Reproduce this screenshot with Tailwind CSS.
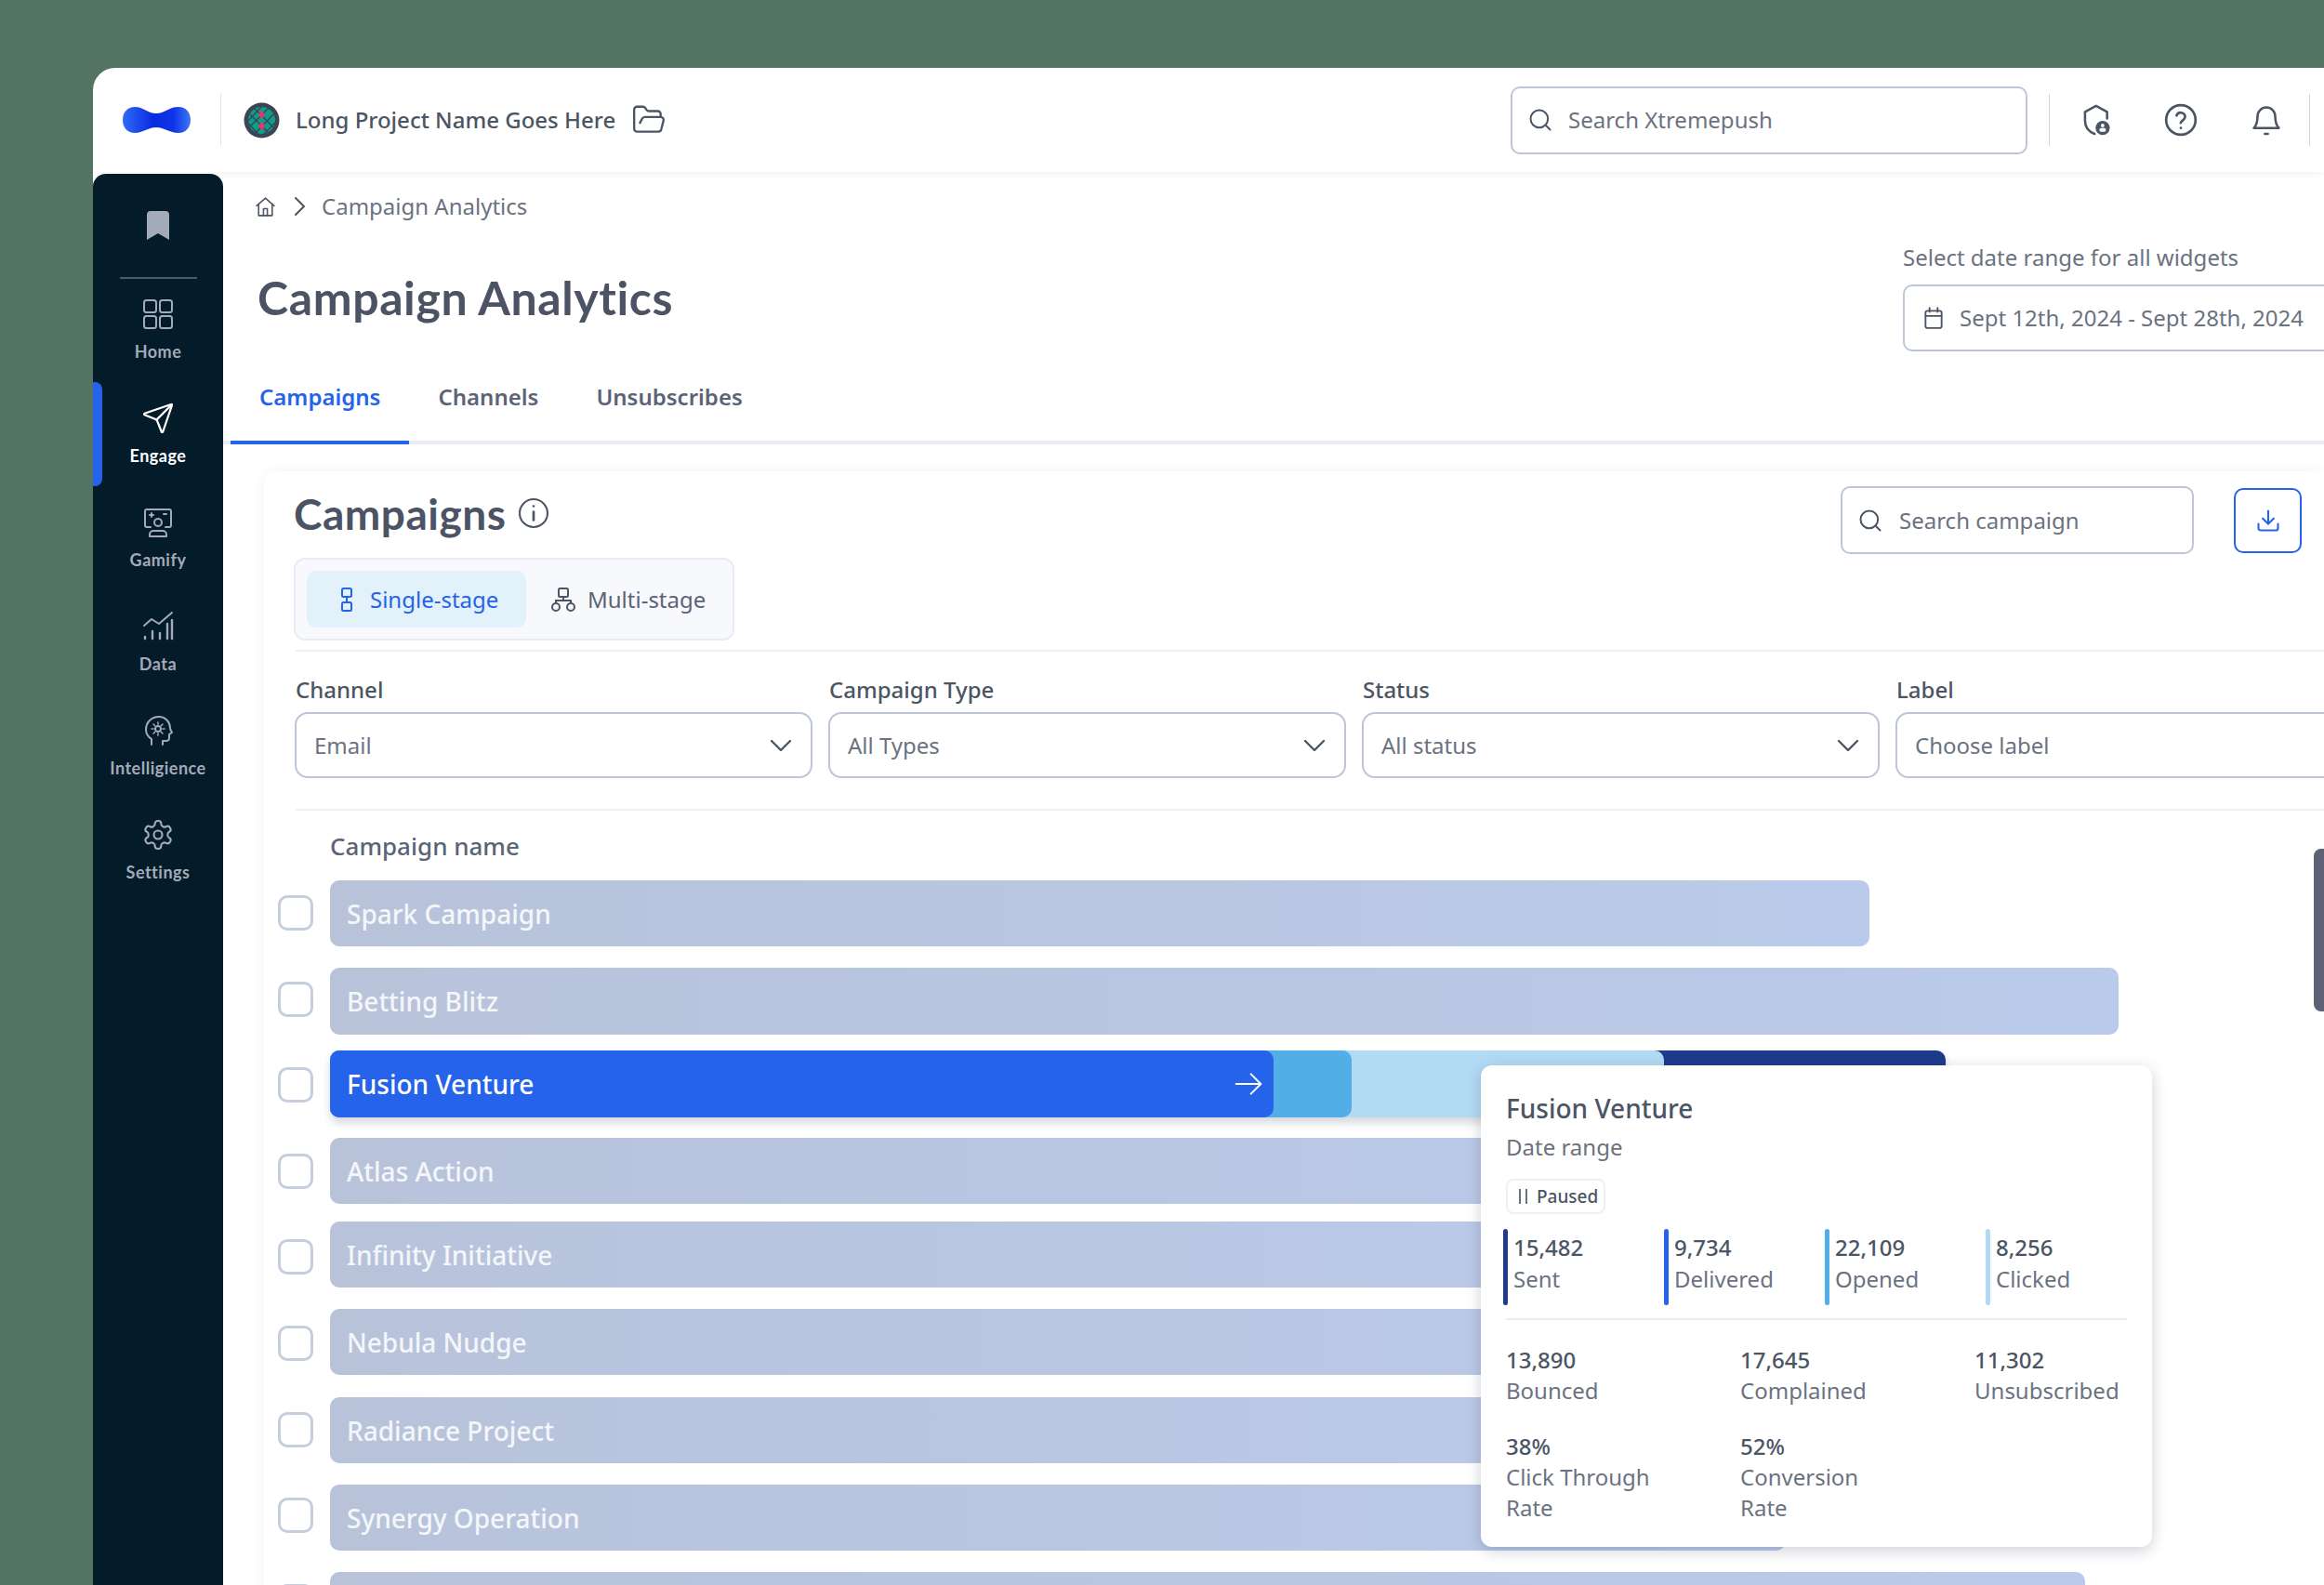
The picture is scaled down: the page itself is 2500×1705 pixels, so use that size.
<!DOCTYPE html>
<html lang="en">

<head>
  <meta charset="UTF-8">
  <title>Campaign Analytics</title>
  <script src="https://cdn.jsdelivr.net/npm/@tailwindcss/browser@4"></script>
</head>

<body class="w-[2500px] h-[1705px] overflow-hidden bg-[#547463] pl-[100px] pt-[73px] font-['Noto_Sans',sans-serif] text-[#4b5563]">
  <div class="relative w-[2400px] h-[1632px] overflow-hidden rounded-tl-[24px] bg-white flex flex-col">

    <!-- top bar -->
    <header class="h-[112px] shrink-0 flex items-center pl-[32px] pr-[15px] shadow-[0_2px_8px_rgba(30,40,70,0.06)]">
      <svg class="w-[73px] h-[28px]" viewBox="0 0 73 28">
        <defs>
          <linearGradient id="logoFill" x1="0" x2="1" y1="0" y2="0">
            <stop offset="0" stop-color="#2f6bf5" />
            <stop offset="0.45" stop-color="#0a2be0" />
            <stop offset="0.75" stop-color="#0f35e8" />
            <stop offset="1" stop-color="#3d78f7" />
          </linearGradient>
        </defs>
        <path d="M0 14C0 5 6 0 13 0c9 0 14 7 23 7s14-7 24-7c8 0 13 6 13 14s-5 14-13 14c-10 0-15-6-24-6s-14 6-23 6C6 28 0 23 0 14z" fill="url(#logoFill)" />
      </svg>
      <div class="ml-[32px] w-[1px] h-[56px] bg-[#dfe3ec]"></div>
      <svg class="ml-[24px] w-[39px] h-[39px]" viewBox="0 0 39 39">
        <circle cx="19.5" cy="19.5" r="19" fill="#3b4654" />
        <circle cx="19.5" cy="19.5" r="14.5" fill="#0f9d8a" />
        <path d="M7 13l20 20M12 7l22 22M2 19l16 18M27 6L6 27M33 12L13 33M20 4L5 20M36 20L20 36" stroke="#3b4654" stroke-width="1.4" fill="none" />
        <path d="M19.5 9l3.6 4.5-3.6 4.5-3.6-4.5zM19.5 21l3.6 4.5-3.6 4.5-3.6-4.5z" fill="#e8356d" />
      </svg>
      <span class="ml-[17px] text-[24px] leading-[32px] font-medium text-[#4b5563] whitespace-nowrap">Long Project Name Goes Here</span>
      <svg class="ml-[17px] w-[38px] h-[38px] text-[#4b5563]" viewBox="0 0 24 24" fill="none" stroke="currentColor" stroke-width="1.5" stroke-linecap="round" stroke-linejoin="round">
        <path d="m6 14 1.5-2.9A2 2 0 0 1 9.24 10H20a2 2 0 0 1 1.94 2.5l-1.54 6a2 2 0 0 1-1.95 1.5H4a2 2 0 0 1-2-2V5a2 2 0 0 1 2-2h3.9a2 2 0 0 1 1.69.9l.81 1.2a2 2 0 0 0 1.67.9H18a2 2 0 0 1 2 2v2" />
      </svg>

      <div class="ml-auto w-[556px] h-[73px] flex items-center rounded-[10px] border-2 border-[#bcc5da] pl-[16px]">
        <svg class="w-[28px] h-[28px] text-[#4b5563]" viewBox="0 0 24 24" fill="none" stroke="currentColor" stroke-width="1.7" stroke-linecap="round">
          <circle cx="11" cy="11" r="8" />
          <path d="m21 21-4.3-4.3" />
        </svg>
        <span class="ml-[16px] text-[24px] text-[#6b7280] whitespace-nowrap">Search Xtremepush</span>
      </div>
      <div class="ml-[23px] w-[1px] h-[56px] bg-[#cfd4df]"></div>
      <svg class="ml-[30px] w-[38px] h-[38px] text-[#4b5563]" viewBox="0 0 24 24" fill="none" stroke="currentColor" stroke-width="1.6" stroke-linecap="round" stroke-linejoin="round">
        <path d="M20 11V6.5L12.5 2.5 5 6.5v6c0 4.5 2.8 7.6 6.5 9" />
        <circle cx="17" cy="17.5" r="4.8" fill="currentColor" stroke="none" />
        <circle cx="17" cy="15.8" r="1.2" fill="#fff" stroke="none" />
        <rect x="14.8" y="17.6" width="4.4" height="2.4" rx="1" fill="#fff" stroke="none" />
      </svg>
      <svg class="ml-[54px] w-[38px] h-[38px] text-[#4b5563]" viewBox="0 0 24 24" fill="none" stroke="currentColor" stroke-width="1.7" stroke-linecap="round" stroke-linejoin="round">
        <circle cx="12" cy="12" r="10" />
        <path d="M9.1 9a3 3 0 0 1 5.8 1c0 2-3 2.6-3 4" />
        <path d="M12 17.5h.01" />
      </svg>
      <svg class="ml-[54px] w-[38px] h-[38px] text-[#4b5563]" viewBox="0 0 24 24" fill="none" stroke="currentColor" stroke-width="1.6" stroke-linecap="round" stroke-linejoin="round">
        <path d="M6 9.5a6 6 0 0 1 12 0c0 4.5 1 6.5 2.5 8h-17C5 16 6 14 6 9.5z" />
        <path d="M11 21.5h2" />
      </svg>
      <div class="ml-[27px] w-[1px] h-[56px] bg-[#cfd4df]"></div>
    </header>

    <div class="flex flex-1 min-h-0 mt-[2px]">
      <!-- sidebar -->
      <aside class="relative w-[140px] shrink-0 rounded-t-[14px] bg-[#041c2a] flex flex-col items-center font-['Lato',sans-serif] text-[#a3aab8]">
        <svg class="mt-[40px] w-[24px] h-[31px] text-[#a3aab8]" viewBox="0 0 24 31" fill="currentColor">
          <path d="M0 4a4 4 0 0 1 4-4h16a4 4 0 0 1 4 4v27l-12-7-12 7z" />
        </svg>
        <div class="mt-[40px] w-[83px] h-[2px] bg-[#4b5a68]"></div>

        <a class="mt-[20px] h-[92px] flex flex-col items-center">
          <svg class="w-[36px] h-[36px]" viewBox="0 0 36 36" fill="none" stroke="currentColor" stroke-width="2">
            <rect x="3" y="3" width="13" height="13" rx="2.5" />
            <rect x="20" y="3" width="13" height="13" rx="2.5" />
            <rect x="3" y="20" width="13" height="13" rx="2.5" />
            <rect x="20" y="20" width="13" height="13" rx="2.5" />
          </svg>
          <span class="mt-[11px] text-[18px] leading-[22px] font-bold tracking-[0.5px]">Home</span>
        </a>
        <a class="mt-[20px] h-[92px] flex flex-col items-center text-white">
          <svg class="w-[36px] h-[36px]" viewBox="0 0 24 24" fill="none" stroke="currentColor" stroke-width="1.5" stroke-linecap="round" stroke-linejoin="round">
            <path d="M14.536 21.686a.5.5 0 0 0 .937-.024l6.5-19a.496.496 0 0 0-.635-.635l-19 6.5a.5.5 0 0 0-.024.937l7.93 3.18a2 2 0 0 1 1.112 1.11z" />
            <path d="m21.854 2.147-10.94 10.939" />
          </svg>
          <span class="mt-[11px] text-[18px] leading-[22px] font-bold tracking-[0.5px]">Engage</span>
        </a>
        <a class="mt-[20px] h-[92px] flex flex-col items-center">
          <svg class="w-[36px] h-[36px]" viewBox="0 0 36 36" fill="none" stroke="currentColor" stroke-width="2" stroke-linecap="round" stroke-linejoin="round">
            <path d="M10 23H6a2 2 0 0 1-2-2V6a2 2 0 0 1 2-2h24a2 2 0 0 1 2 2v15a2 2 0 0 1-2 2h-4" />
            <circle cx="18" cy="18" r="4" />
            <path d="M9 33v-2a4 4 0 0 1 4-4h10a4 4 0 0 1 4 4v2z" />
            <path d="M9 10h4M11 8v4M24 9h3" />
          </svg>
          <span class="mt-[11px] text-[18px] leading-[22px] font-bold tracking-[0.5px]">Gamify</span>
        </a>
        <a class="mt-[20px] h-[92px] flex flex-col items-center">
          <svg class="w-[36px] h-[36px]" viewBox="0 0 36 36" fill="none" stroke="currentColor" stroke-width="2.4" stroke-linecap="round" stroke-linejoin="round">
            <path d="M3 17l8-7 8 5L33 3" stroke-width="2" />
            <path d="M4 31v-2M12 31v-8M20 31v-6M28 31V15M33 31V11" />
          </svg>
          <span class="mt-[11px] text-[18px] leading-[22px] font-bold tracking-[0.5px]">Data</span>
        </a>
        <a class="mt-[20px] h-[92px] flex flex-col items-center">
          <svg class="w-[36px] h-[36px]" viewBox="0 0 36 36" fill="none" stroke="currentColor" stroke-width="2" stroke-linecap="round" stroke-linejoin="round">
            <path d="M11 33v-6c-3-2-6-5-6-10C5 9 11 3 19 3c7 0 12 6 12 12 0 2 1 3 2 5l-3 2v4c0 2-2 3-4 3h-3v4" />
            <circle cx="18" cy="16" r="3" />
            <path d="M18 9v2M18 21v2M11 16h2M23 16h2M13 11l1.500 1.500M23 21l-1.500-1.500M13 21l1.500-1.500M23 11l-1.500 1.500" stroke-width="1.6" />
          </svg>
          <span class="mt-[11px] text-[18px] leading-[22px] font-bold tracking-[0.5px] whitespace-nowrap">Intelligience</span>
        </a>
        <a class="mt-[20px] h-[92px] flex flex-col items-center">
          <svg class="w-[36px] h-[36px]" viewBox="0 0 24 24" fill="none" stroke="currentColor" stroke-width="1.4" stroke-linecap="round" stroke-linejoin="round">
            <path d="M12.22 2h-.44a2 2 0 0 0-2 2v.18a2 2 0 0 1-1 1.730l-.43.25a2 2 0 0 1-2 0l-.15-.08a2 2 0 0 0-2.730.73l-.22.38a2 2 0 0 0 .73 2.730l.15.1a2 2 0 0 1 1 1.720v.51a2 2 0 0 1-1 1.740l-.15.09a2 2 0 0 0-.73 2.730l.22.38a2 2 0 0 0 2.730.73l.15-.08a2 2 0 0 1 2 0l.43.25a2 2 0 0 1 1 1.730V20a2 2 0 0 0 2 2h.44a2 2 0 0 0 2-2v-.18a2 2 0 0 1 1-1.730l.43-.25a2 2 0 0 1 2 0l.15.08a2 2 0 0 0 2.730-.73l.22-.39a2 2 0 0 0-.73-2.730l-.15-.08a2 2 0 0 1-1-1.740v-.5a2 2 0 0 1 1-1.740l.15-.09a2 2 0 0 0 .73-2.730l-.22-.38a2 2 0 0 0-2.730-.73l-.15.08a2 2 0 0 1-2 0l-.43-.25a2 2 0 0 1-1-1.730V4a2 2 0 0 0-2-2z" />
            <circle cx="12" cy="12" r="3" />
          </svg>
          <span class="mt-[11px] text-[18px] leading-[22px] font-bold tracking-[0.5px]">Settings</span>
        </a>
        <!-- active item marker -->
        <div class="absolute left-0 top-[224px] w-[10px] h-[112px] rounded-r-[8px] bg-[#2563eb]"></div>
      </aside>

      <!-- main -->
      <main class="flex-1 min-w-0 flex flex-col">
        <nav class="pt-[21px] pl-[33px] h-[75px] shrink-0 flex items-start text-[#6b7280]">
          <div class="h-[28px] flex items-center">
            <svg class="w-[25px] h-[25px] text-[#4b5563]" viewBox="0 0 24 24" fill="none" stroke="currentColor" stroke-width="1.5" stroke-linecap="round" stroke-linejoin="round">
              <path d="M3 11l9-8 9 8" />
              <path d="M5 9.500V21h14V9.500" />
              <path d="M10 21v-7h4v7" />
            </svg>
            <svg class="ml-[17px] w-[15px] h-[24px] text-[#4b5563]" viewBox="0 0 15 24" fill="none" stroke="currentColor" stroke-width="2" stroke-linecap="round" stroke-linejoin="round">
              <path d="M3 3l9 9-9 9" />
            </svg>
            <span class="ml-[16px] text-[24px] whitespace-nowrap">Campaign Analytics</span>
          </div>
        </nav>

        <div class="h-[116px] shrink-0 flex items-center pl-[37px]">
          <h1 class="w-[1770px] shrink-0 font-['Lato',sans-serif] text-[50px] leading-[60px] font-bold tracking-[0.6px] text-[#4b5365]">Campaign Analytics</h1>
          <div class="shrink-0">
            <div class="h-[30px] text-[24px] leading-[30px] text-[#6b7280] whitespace-nowrap">Select date range for all widgets</div>
            <div class="mt-[14px] w-[500px] h-[72px] flex items-center rounded-[10px] border-2 border-[#bcc5da] pl-[18px]">
              <svg class="w-[26px] h-[26px] text-[#4b5563]" viewBox="0 0 24 24" fill="none" stroke="currentColor" stroke-width="1.700" stroke-linecap="round" stroke-linejoin="round">
                <rect x="4" y="5" width="16" height="17" rx="2" />
                <path d="M4 10h16M8 2v4M16 2v4" />
              </svg>
              <span class="ml-[15px] text-[24px] text-[#6b7280] whitespace-nowrap">Sept 12th, 2024 - Sept 28th, 2024</span>
            </div>
          </div>
        </div>

        <div class="h-[100px] shrink-0 flex items-end border-b-[4px] border-[#e8ecf4] text-[24px] font-semibold text-[#5b6476]">
          <a class="ml-[8px] -mb-[4px] h-[100px] px-[31px] pt-[33px] leading-[32px] text-[#2563eb] border-b-[4px] border-[#2563eb]">Campaigns</a>
          <a class="-mb-[4px] h-[100px] px-[31px] pt-[33px] leading-[32px]">Channels</a>
          <a class="-mb-[4px] h-[100px] px-[31px] pt-[33px] leading-[32px]">Unsubscribes</a>
        </div>

        <!-- campaigns card -->
        <section class="ml-[44px] mt-[29px] flex-1 rounded-tl-[12px] bg-white pl-[32px] pt-[16px] shadow-[0_0_14px_rgba(30,40,70,0.05)]">
          <div class="flex items-start">
            <div class="w-[1664px] shrink-0">
              <div class="h-[60px] flex items-center">
                <h2 class="font-['Lato',sans-serif] text-[46px] leading-[60px] font-bold tracking-[0.5px] text-[#4b5365]">Campaigns</h2>
                <svg class="ml-[12px] -mt-[2px] w-[36px] h-[36px] text-[#4b5563]" viewBox="0 0 24 24" fill="none" stroke="currentColor" stroke-width="1.400" stroke-linecap="round">
                  <circle cx="12" cy="12" r="10" />
                  <path d="M12 11v6M12 7h.01" stroke-width="1.800" />
                </svg>
              </div>
              <div class="mt-[17px] w-[474px] h-[89px] flex items-center rounded-[12px] border-2 border-[#e8ecf4] bg-[#f8f9fc] pl-[12px]">
                <div class="w-[236px] h-[61px] flex items-center rounded-[10px] bg-[#e3f1fb] pl-[33px] text-[#2563eb]">
                  <svg class="w-[20px] h-[28px]" viewBox="0 0 20 28" fill="none" stroke="currentColor" stroke-width="2">
                    <rect x="5" y="2" width="10" height="9" rx="1.500" />
                    <rect x="5" y="17" width="10" height="9" rx="1.500" />
                    <path d="M10 11v6" />
                  </svg>
                  <span class="ml-[15px] text-[24px] whitespace-nowrap">Single-stage</span>
                </div>
                <svg class="ml-[26px] w-[28px] h-[28px] text-[#4b5563]" viewBox="0 0 28 28" fill="none" stroke="currentColor" stroke-width="2">
                  <rect x="9" y="2" width="10" height="9" rx="1.500" />
                  <circle cx="6" cy="22" r="4" />
                  <circle cx="22" cy="22" r="4" />
                  <path d="M14 11v4M6 18v-3h16v3" />
                </svg>
                <span class="ml-[12px] text-[24px] text-[#5b6476] whitespace-nowrap">Multi-stage</span>
              </div>
            </div>
            <div class="w-[380px] h-[73px] shrink-0 flex items-center rounded-[10px] border-2 border-[#bcc5da] pl-[16px]">
              <svg class="w-[28px] h-[28px] text-[#4b5563]" viewBox="0 0 24 24" fill="none" stroke="currentColor" stroke-width="1.700" stroke-linecap="round">
                <circle cx="11" cy="11" r="8" />
                <path d="m21 21-4.300-4.300" />
              </svg>
              <span class="ml-[17px] text-[24px] text-[#6b7280] whitespace-nowrap">Search campaign</span>
            </div>
            <div class="ml-[43px] mt-[2px] w-[73px] h-[70px] shrink-0 flex items-center justify-center rounded-[10px] border-2 border-[#2563eb] text-[#2563eb]">
              <svg class="w-[28px] h-[28px]" viewBox="0 0 24 24" fill="none" stroke="currentColor" stroke-width="1.800" stroke-linecap="round" stroke-linejoin="round">
                <path d="M21 15v4a2 2 0 0 1-2 2H5a2 2 0 0 1-2-2v-4" />
                <path d="M7 10l5 5 5-5" />
                <path d="M12 15V3" />
              </svg>
            </div>
          </div>

          <div class="mt-[10px] ml-[2px] h-[2px] bg-[#eef0f6]"></div>

          <div class="mt-[26px] ml-[1px] flex gap-[17px]">
            <div class="w-[557px] shrink-0">
              <div class="pl-[1px] h-[30px] text-[24px] leading-[30px] font-medium text-[#4b5563]">Channel</div>
              <div class="mt-[9px] h-[71px] flex items-center justify-between rounded-[14px] border-2 border-[#bcc5da] pl-[19px] pr-[19px] text-[24px] text-[#6b7280]">
                <span>Email</span>
                <svg class="w-[26px] h-[16px] text-[#4b5563]" viewBox="0 0 26 16" fill="none" stroke="currentColor" stroke-width="2.400" stroke-linecap="round" stroke-linejoin="round"><path d="M3 3l10 10L23 3" /></svg>
              </div>
            </div>
            <div class="w-[557px] shrink-0">
              <div class="pl-[1px] h-[30px] text-[24px] leading-[30px] font-medium text-[#4b5563]">Campaign Type</div>
              <div class="mt-[9px] h-[71px] flex items-center justify-between rounded-[14px] border-2 border-[#bcc5da] pl-[19px] pr-[19px] text-[24px] text-[#6b7280]">
                <span>All Types</span>
                <svg class="w-[26px] h-[16px] text-[#4b5563]" viewBox="0 0 26 16" fill="none" stroke="currentColor" stroke-width="2.400" stroke-linecap="round" stroke-linejoin="round"><path d="M3 3l10 10L23 3" /></svg>
              </div>
            </div>
            <div class="w-[557px] shrink-0">
              <div class="pl-[1px] h-[30px] text-[24px] leading-[30px] font-medium text-[#4b5563]">Status</div>
              <div class="mt-[9px] h-[71px] flex items-center justify-between rounded-[14px] border-2 border-[#bcc5da] pl-[19px] pr-[19px] text-[24px] text-[#6b7280]">
                <span>All status</span>
                <svg class="w-[26px] h-[16px] text-[#4b5563]" viewBox="0 0 26 16" fill="none" stroke="currentColor" stroke-width="2.400" stroke-linecap="round" stroke-linejoin="round"><path d="M3 3l10 10L23 3" /></svg>
              </div>
            </div>
            <div class="w-[557px] shrink-0">
              <div class="pl-[1px] h-[30px] text-[24px] leading-[30px] font-medium text-[#4b5563]">Label</div>
              <div class="mt-[9px] h-[71px] flex items-center rounded-[14px] border-2 border-[#bcc5da] pl-[19px] text-[24px] text-[#6b7280]">
                <span>Choose label</span>
              </div>
            </div>
          </div>

          <div class="mt-[33px] ml-[2px] h-[2px] bg-[#eef0f6]"></div>

          <div class="mt-[23px] pl-[39px] h-[30px] text-[26px] leading-[30px] font-medium text-[#5b6476]">Campaign name</div>

          <div class="mt-[22px] -ml-[17px] flex items-start">
            <!-- checkboxes -->
            <div class="mt-[16px] flex flex-col gap-[54.600px]">
              <div class="w-[38px] h-[38px] rounded-[10px] border-[3px] border-[#c5cddf]"></div>
              <div class="w-[38px] h-[38px] rounded-[10px] border-[3px] border-[#c5cddf]"></div>
              <div class="w-[38px] h-[38px] rounded-[10px] border-[3px] border-[#c5cddf]"></div>
              <div class="w-[38px] h-[38px] rounded-[10px] border-[3px] border-[#c5cddf]"></div>
              <div class="w-[38px] h-[38px] rounded-[10px] border-[3px] border-[#c5cddf]"></div>
              <div class="w-[38px] h-[38px] rounded-[10px] border-[3px] border-[#c5cddf]"></div>
              <div class="w-[38px] h-[38px] rounded-[10px] border-[3px] border-[#c5cddf]"></div>
              <div class="w-[38px] h-[38px] rounded-[10px] border-[3px] border-[#c5cddf]"></div>
              <div class="w-[38px] h-[38px] rounded-[10px] border-[3px] border-[#c5cddf]"></div>
            </div>
            <!-- bars -->
            <div class="ml-[18px] flex flex-col text-[28px] font-medium text-white/85">
              <div class="w-[1656px] h-[71px] flex items-center rounded-[10px] bg-linear-to-r from-[#b8c3da] to-[#bacaea] pl-[18px]">Spark Campaign</div>
              <div class="mt-[23px] w-[1924px] h-[72px] flex items-center rounded-[10px] bg-linear-to-r from-[#b8c3da] to-[#bacaea] pl-[18px]">Betting Blitz</div>
              <div class="mt-[17px] w-[1738px] h-[72px] rounded-[10px] bg-[#1e3a8a] shadow-[0_6px_10px_rgba(30,40,70,0.18)]">
                <div class="w-[1435px] h-full rounded-[10px] bg-[#b3daf5]">
                  <div class="w-[1099px] h-full rounded-[10px] bg-[#53ade6]">
                    <div class="w-[1015px] h-full flex items-center justify-between rounded-[10px] bg-[#2563eb] pl-[18px] pr-[11px] text-white">
                      <span>Fusion Venture</span>
                      <svg class="w-[32px] h-[32px]" viewBox="0 0 24 24" fill="none" stroke="currentColor" stroke-width="1.500" stroke-linecap="round" stroke-linejoin="round">
                        <path d="M2 12h20M14 4l8 8-8 8" />
                      </svg>
                    </div>
                  </div>
                </div>
              </div>
              <div class="mt-[22px] w-[1560px] h-[71px] flex items-center rounded-[10px] bg-linear-to-r from-[#b8c3da] to-[#bacaea] pl-[18px]">Atlas Action</div>
              <div class="mt-[19px] w-[1500px] h-[71px] flex items-center rounded-[10px] bg-linear-to-r from-[#b8c3da] to-[#bacaea] pl-[18px]">Infinity Initiative</div>
              <div class="mt-[23px] w-[1600px] h-[71px] flex items-center rounded-[10px] bg-linear-to-r from-[#b8c3da] to-[#bacaea] pl-[18px]">Nebula Nudge</div>
              <div class="mt-[24px] w-[1480px] h-[71px] flex items-center rounded-[10px] bg-linear-to-r from-[#b8c3da] to-[#bacaea] pl-[18px]">Radiance Project</div>
              <div class="mt-[23px] w-[1566px] h-[71px] flex items-center rounded-[10px] bg-linear-to-r from-[#b8c3da] to-[#bacaea] pl-[18px]">Synergy Operation</div>
              <div class="mt-[23px] w-[1888px] h-[71px] rounded-[10px] bg-linear-to-r from-[#b8c3da] to-[#bacaea]"></div>
            </div>
          </div>
        </section>
      </main>
    </div>

    <!-- page scrollbar thumb -->
    <div class="absolute left-[2389px] top-[840px] w-[12px] h-[175px] rounded-l-[8px] bg-[#5c6175]"></div>

    <!-- hover tooltip -->
    <div class="absolute left-[1493px] top-[1073px] w-[722px] h-[518px] rounded-[12px] bg-white pl-[27px] pt-[30px] shadow-[0_4px_16px_rgba(30,40,70,0.22)]">
      <div class="text-[28px] leading-[32px] font-medium text-[#4b5563]">Fusion Venture</div>
      <div class="mt-[10px] text-[24px] leading-[32px] text-[#6b7280]">Date range</div>
      <div class="mt-[18px] w-[107px] h-[38px] flex items-center rounded-[8px] border-2 border-[#eef0f6] pl-[11px] text-[#4b5563]">
        <svg class="w-[12px] h-[18px] text-[#6b7280]" viewBox="0 0 12 18" fill="none" stroke="currentColor" stroke-width="2"><path d="M2 1v16M9 1v16" /></svg>
        <span class="ml-[8px] text-[19px] leading-[24px] font-medium whitespace-nowrap">Paused</span>
      </div>
      <div class="mt-[16px] -ml-[3px] flex">
        <div class="w-[173px] flex">
          <div class="w-[5px] h-[82px] rounded-full bg-[#1e3a8a]"></div>
          <div class="pl-[6px] pt-[3px] text-[24px] leading-[34px]"><div class="font-medium text-[#4b5563]">15,482</div><div class="text-[#6b7280]">Sent</div></div>
        </div>
        <div class="w-[173px] flex">
          <div class="w-[5px] h-[82px] rounded-full bg-[#2563eb]"></div>
          <div class="pl-[6px] pt-[3px] text-[24px] leading-[34px]"><div class="font-medium text-[#4b5563]">9,734</div><div class="text-[#6b7280]">Delivered</div></div>
        </div>
        <div class="w-[173px] flex">
          <div class="w-[5px] h-[82px] rounded-full bg-[#53ade6]"></div>
          <div class="pl-[6px] pt-[3px] text-[24px] leading-[34px]"><div class="font-medium text-[#4b5563]">22,109</div><div class="text-[#6b7280]">Opened</div></div>
        </div>
        <div class="w-[173px] flex">
          <div class="w-[5px] h-[82px] rounded-full bg-[#b3daf5]"></div>
          <div class="pl-[6px] pt-[3px] text-[24px] leading-[34px]"><div class="font-medium text-[#4b5563]">8,256</div><div class="text-[#6b7280]">Clicked</div></div>
        </div>
      </div>
      <div class="mt-[14px] w-[668px] h-[2px] bg-[#e8ecf4]"></div>
      <div class="mt-[26px] grid grid-cols-[252px_252px_1fr] gap-y-[27px] text-[24px] leading-[33px]">
        <div><div class="font-medium text-[#4b5563]">13,890</div><div class="text-[#6b7280]">Bounced</div></div>
        <div><div class="font-medium text-[#4b5563]">17,645</div><div class="text-[#6b7280]">Complained</div></div>
        <div><div class="font-medium text-[#4b5563]">11,302</div><div class="text-[#6b7280]">Unsubscribed</div></div>
        <div><div class="font-medium text-[#4b5563]">38%</div><div class="text-[#6b7280]">Click Through<br>Rate</div></div>
        <div><div class="font-medium text-[#4b5563]">52%</div><div class="text-[#6b7280]">Conversion<br>Rate</div></div>
      </div>
    </div>
  </div>
</body>

</html>
